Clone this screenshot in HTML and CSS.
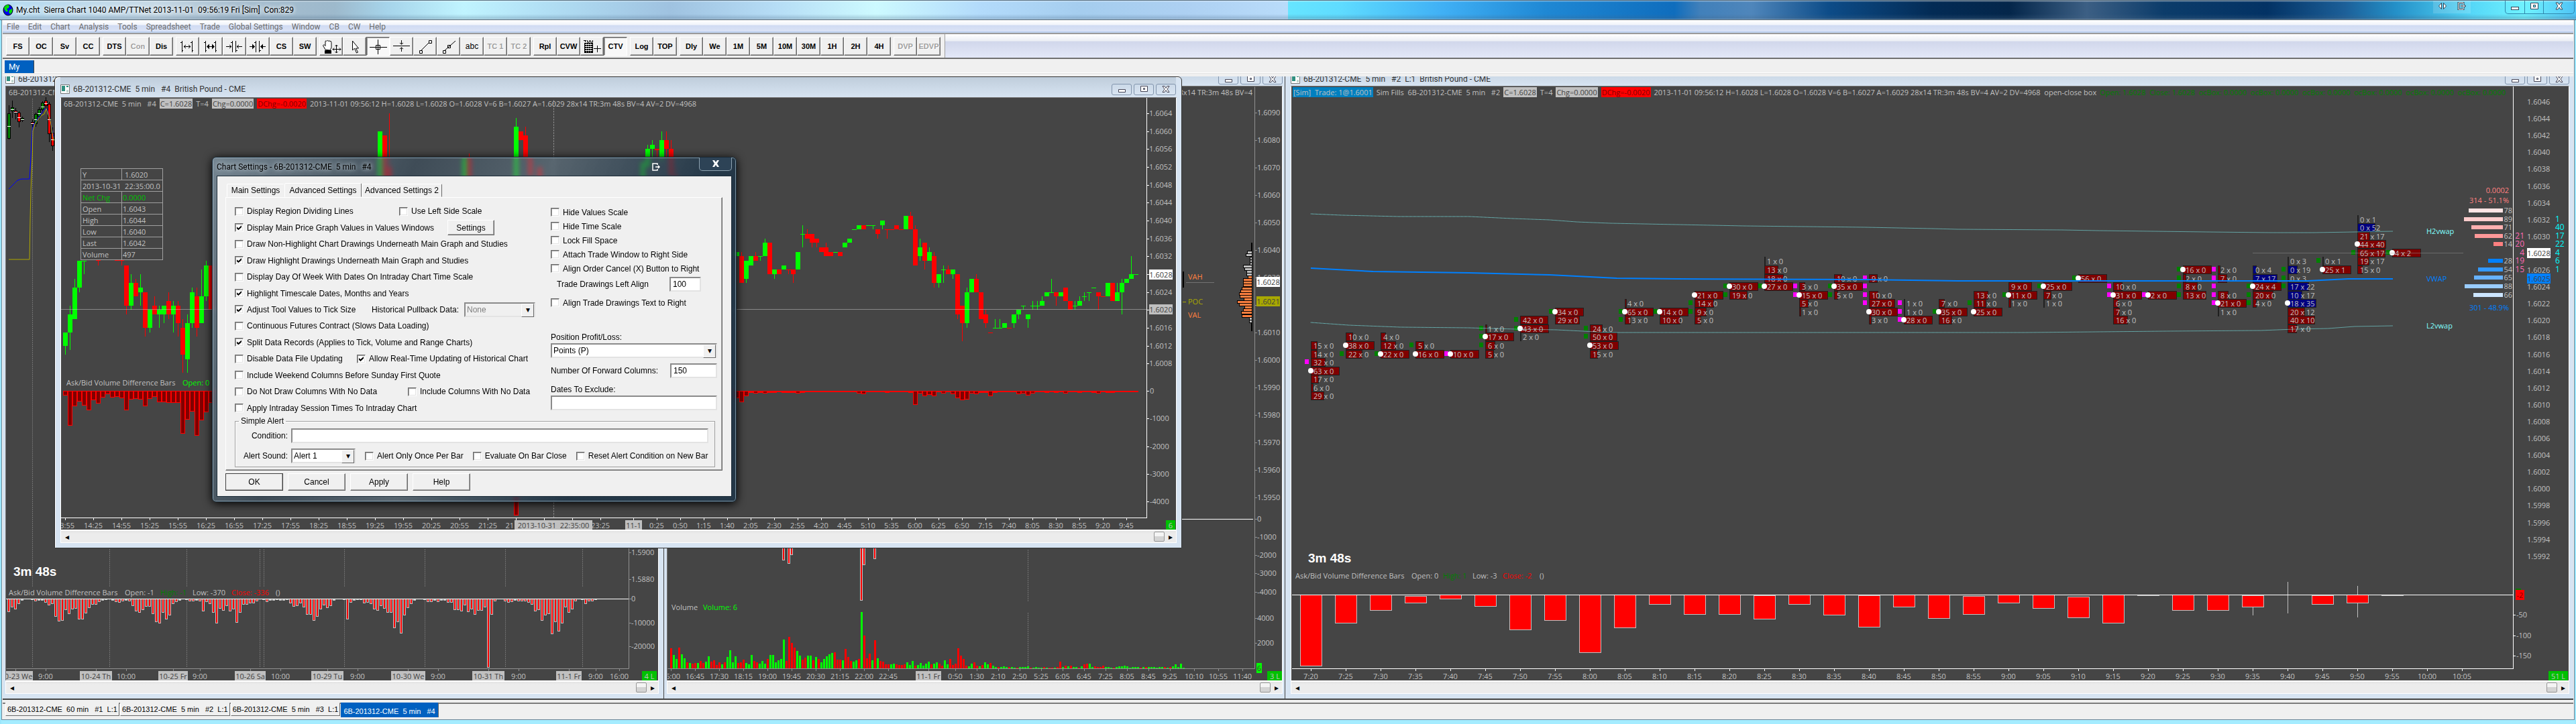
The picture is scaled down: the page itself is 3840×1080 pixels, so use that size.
FILE: index.html
```html
<!DOCTYPE html>
<html lang="en">
<head>
    <meta charset="utf-8">
    <title>My.cht Sierra Chart</title>
    <link rel="stylesheet" href="styles.css">
</head>
<body>
    <header class="titlebar">
        <svg class="globe" width="16" height="18" viewBox="0 0 16 18">
            <ellipse cx="8" cy="9" rx="7" ry="8" fill="#0000f0" stroke="#000"/>
            <path d="M2 5 L6 1 L10 2 L9 6 L6 7 L8 10 L6 12 L3 9 Z M10 9 L14 7 L14 12 L11 15 L9 12 Z" fill="#00e000"/>
        </svg>
        <h1>My.cht&nbsp; Sierra Chart 1040 AMP/TTNet 2013-11-01&nbsp; 09:56:19 Fri [Sim]&nbsp; Con:829</h1>
        <div class="extra-buttons">
            <button aria-label="Move to other monitor"><svg width="14" height="12" viewBox="0 0 14 12"><path d="M5.500 1.500v9L1.500 6zM8.500 1.500v9L12.500 6z" fill="#fff" stroke="#345"/></svg></button>
            <button aria-label="Send to monitor"><svg width="14" height="12" viewBox="0 0 14 12"><path d="M10 3V1H3v10h7V9M6 6h6M10 4l2 2-2 2" fill="none" stroke="#345" stroke-width="3"/><path d="M10 3V1H3v10h7V9M6 6h6M10 4l2 2-2 2" fill="none" stroke="#fff"/></svg></button>
        </div>
        <div class="main-buttons">
            <button aria-label="Minimize"><svg width="14" height="12" viewBox="0 0 14 12"><rect x="1.500" y="7.500" width="11" height="4" fill="#fff" stroke="#345"/></svg></button>
            <button aria-label="Restore"><svg width="14" height="12" viewBox="0 0 14 12"><path d="M1.500 1.500h11v9h-11zM5.500 4.500h3v3h-3z" fill="#fff" fill-rule="evenodd" stroke="#345"/></svg></button>
            <button class="close" aria-label="Close"><svg width="14" height="12" viewBox="0 0 14 12"><path d="M2 1h3l2 3 2-3h3L9 6l3 5H9L7 8l-2 3H2l3-5z" fill="#fff" stroke="#345"/></svg></button>
        </div>
    </header>

    <div class="frame">
        <nav class="menubar">
            <a href="#">File</a><a href="#">Edit</a><a href="#">Chart</a><a href="#">Analysis</a><a href="#">Tools</a><a href="#">Spreadsheet</a><a href="#">Trade</a><a href="#">Global Settings</a><a href="#">Window</a><a href="#">CB</a><a href="#">CW</a><a href="#">Help</a>
        </nav>

        <div class="toolbar">
            <div class="tools">
                <div class="group"><button>FS</button><button>OC</button><button>Sv</button><button>CC</button></div>
                <div class="group"><button>DTS</button><button disabled>Con</button><button>Dis</button></div>
                <div class="group">
                    <button aria-label="Bar spacing out"><svg viewBox="0 0 31 23"><path d="M7.500 3v17M5 5.500h2M7 17.500h2M22.500 3v17M20 5.500h2M22 17.500h2M10 11.500h10M13 9l-3 2.500 3 2.500M17 9l3 2.500-3 2.500"/></svg></button>
                    <button aria-label="Bar width out"><svg viewBox="0 0 31 23"><path d="M7.500 3v17M5 5.500h2M7 17.500h2M22.500 3v17M20 5.500h2M22 17.500h2M10 11.500h10" /><path class="solid" d="M9 11.500l4-4v8zM21 11.500l-4-4v8z"/></svg></button>
                    <button aria-label="Bar spacing in"><svg viewBox="0 0 31 23"><path d="M12.500 3v17M10 5.500h2M17.500 3v17M18 17.500h2M3 11.500h8M8 9l3 2.500-3 2.500M27 11.500h-8M22 9l-3 2.500 3 2.500"/></svg></button>
                    <button aria-label="Bar width in"><svg viewBox="0 0 31 23"><path d="M12.500 3v17M10 5.500h2M17.500 3v17M18 17.500h2M3 11.500h8M27 11.500h-8"/><path class="solid" d="M11 11.500l-4-4v8zM19 11.500l4-4v8z"/></svg></button>
                    <button>CS</button><button>SW</button>
                </div>
                <div class="group">
                    <button aria-label="Hand"><svg viewBox="0 0 31 23"><path d="M7 16L3.500 10 5 8.500l2 2V3.500q1.500-1.500 2 0 1-2.500 3 0 1-1.500 2 0 2-.5 2 2V13l-2 4z" fill="#fff"/><path class="solid" d="M6 17h10v5H6z"/><path d="M23.500 9v12M18 15.500h12M21.500 11l2-2 2 2M21.500 19l2 2 2-2M20 13.500l-2 2 2 2M28 13.500l2 2-2 2"/></svg></button>
                    <button aria-label="Pointer"><svg viewBox="0 0 31 23"><path d="M12.500 3v14l3-3 3 7 2-1-3-6h4z" fill="#fff"/></svg></button>
                    <button class="pressed" aria-label="Chart values"><svg viewBox="0 0 31 23"><path d="M3 12.500h26M15.500 1v22M12.500 9.500h6v6h-6z"/></svg></button>
                    <button aria-label="Horizontal level"><svg viewBox="0 0 31 23"><path d="M3 10.500h25M15.500 2v6M13 6l2.500 2L18 6M15.500 19v-6M13 15l2.500-2L18 15"/></svg></button>
                    <button aria-label="Line"><svg viewBox="0 0 31 23"><path d="M9 18L22 5M7.500 17.500h4v4h-4zM21.500 2.500h4v4h-4z"/></svg></button>
                    <button aria-label="Ray"><svg viewBox="0 0 31 23"><path d="M9 18L26 3M7.500 17.500h4v4h-4zM14.500 9.500h4v4h-4z"/></svg></button>
                    <button class="abc">abc</button><button disabled>TC 1</button><button disabled>TC 2</button>
                </div>
                <div class="group">
                    <button>Rpl</button><button>CVW</button>
                    <button aria-label="Trade window"><svg viewBox="0 0 31 23"><path d="M3 2.500h4M5.500 2v3M8.500 2v3h3V2M13.500 2v3h3V2" /><path class="solid" d="M4 6h13v15H4z"/><path d="M5 8.500h11M5 11.500h11M5 14.500h11M5 17.500h11M7.500 7v13M10.500 7v13M13.500 7v13" stroke="#fff" stroke-dasharray="2 1"/><path d="M18 14.500h11M23.500 10v10"/></svg></button>
                    <button class="pressed">CTV</button>
                </div>
                <div class="group"><button>Log</button><button>TOP</button></div>
                <div class="group"><button>Dly</button><button>We</button><button>1M</button><button>5M</button><button>10M</button><button>30M</button><button>1H</button><button>2H</button><button>4H</button></div>
                <div class="group"><button disabled>DVP</button><button disabled>EDVP</button></div>
            </div>
        </div>

        <div class="book-tabs"><button>My</button></div>

        <main class="mdi">
            <section class="pane">
                <div class="pane-title"><svg class="doc"><use href="#doc"/></svg><h2>6B-201312-CME&nbsp; 60 min&nbsp; &nbsp;#1&nbsp; L:1&nbsp; British Pound - CME</h2></div>
                <div class="chart">
                    <svg class="plot" id="hourly"></svg>
                    <div class="readout"><span>6B-201312-CME&nbsp; 60 min&nbsp; &nbsp;#1</span></div>
                </div>
                <div class="scroll"><button aria-label="Scroll left">◂</button><span class="thumb"></span><button aria-label="Scroll right">▸</button></div>
            </section>

            <section class="pane middle">
                <div class="pane-title"><h2></h2>
                    <div class="pane-buttons"><button aria-label="Minimize"><svg><use href="#min"/></svg></button><button aria-label="Maximize"><svg><use href="#max"/></svg></button><button aria-label="Close"><svg><use href="#close"/></svg></button></div>
                </div>
                <div class="chart">
                    <svg class="plot" id="volume"></svg>
                    <div class="readout end"><span>28x14 TR:3m 48s BV=4</span></div>
                </div>
                <div class="scroll"><button aria-label="Scroll left">◂</button><span class="thumb"></span><button aria-label="Scroll right">▸</button></div>
            </section>

            <section class="pane right">
                <div class="pane-title"><svg class="doc"><use href="#doc"/></svg><h2>6B-201312-CME&nbsp; 5 min&nbsp; &nbsp;#2&nbsp; L:1&nbsp; British Pound - CME</h2>
                    <div class="pane-buttons"><button aria-label="Minimize"><svg><use href="#min"/></svg></button><button aria-label="Maximize"><svg><use href="#max"/></svg></button><button aria-label="Close"><svg><use href="#close"/></svg></button></div>
                </div>
                <div class="chart lit">
                    <svg class="plot" id="footprint"></svg>
                    <div class="readout wide">
                        <span class="sim">[Sim]&nbsp; Trade: 1@1.6001</span>
                        <span>Sim Fills&nbsp; 6B-201312-CME&nbsp; 5 min&nbsp; &nbsp;#2</span>
                        <span class="grey">C=1.6028</span>
                        <span>T=4</span>
                        <span class="grey">Chg=0.0000</span>
                        <span class="down">DChg=-0.0020</span>
                        <span>2013-11-01 09:56:12 H=1.6028 L=1.6028 O=1.6028 V=6 B=1.6027 A=1.6029 28x14 TR:3m 48s BV=4 AV=2 DV=4968&nbsp; open-close box</span>
                        <span class="up">Open: 1.6028&nbsp; Close: 1.6028&nbsp; ocBox: 0.0000&nbsp; ocBox: 0.0000&nbsp; ocBox: 0.0000&nbsp; ocBox: 0.0000&nbsp; ocBox: 0.0000&nbsp; ocBox: 0.0000</span>
                    </div>
                </div>
                <div class="scroll"><button aria-label="Scroll left">◂</button><span class="thumb"></span><button aria-label="Scroll right">▸</button></div>
            </section>

            <section class="pane floating">
                <div class="pane-title"><svg class="doc"><use href="#doc"/></svg><h2>6B-201312-CME&nbsp; 5 min&nbsp; &nbsp;#4&nbsp; British Pound - CME</h2>
                    <div class="pane-buttons"><button aria-label="Minimize"><svg><use href="#min"/></svg></button><button aria-label="Maximize"><svg><use href="#max"/></svg></button><button aria-label="Close"><svg><use href="#close"/></svg></button></div>
                </div>
                <div class="chart lit">
                    <svg class="plot" id="candles"></svg>
                    <div class="readout">
                        <span>6B-201312-CME&nbsp; 5 min&nbsp; &nbsp;#4</span>
                        <span class="grey">C=1.6028</span>
                        <span>T=4</span>
                        <span class="grey">Chg=0.0000</span>
                        <span class="down">DChg=-0.0020</span>
                        <span>2013-11-01 09:56:12 H=1.6028 L=1.6028 O=1.6028 V=6 B=1.6027 A=1.6029 28x14 TR:3m 48s BV=4 AV=2 DV=4968</span>
                    </div>
                    <table class="values">
                        <tr><td>Y</td><td class="pad">1.6020</td></tr>
                        <tr><td colspan="2" class="pad">2013-10-31&nbsp; 22:35:00.0</td></tr>
                        <tr class="net"><td>Net Chg</td><td>0.0000</td></tr>
                        <tr><td>Open</td><td>1.6043</td></tr>
                        <tr><td>High</td><td>1.6044</td></tr>
                        <tr><td>Low</td><td>1.6040</td></tr>
                        <tr><td>Last</td><td>1.6042</td></tr>
                        <tr><td>Volume</td><td>497</td></tr>
                    </table>
                </div>
                <div class="scroll"><button aria-label="Scroll left">◂</button><span class="thumb"></span><button aria-label="Scroll right">▸</button></div>
            </section>

            <form class="dialog" onsubmit="return false">
                <div class="dialog-title">
                    <h2>Chart Settings - 6B-201312-CME&nbsp; 5 min&nbsp; &nbsp;#4</h2>
                    <svg class="exit" width="12" height="12" viewBox="0 0 12 12"><path d="M8 3V1H1v10h7V9M5 6h6M9 4l2 2-2 2" fill="none" stroke="#fff" stroke-width="1.500"/></svg>
                    <button type="button" class="dialog-close" aria-label="Close"><svg width="12" height="10" viewBox="0 0 12 10"><path d="M1 0h3l2 3 2-3h3L8 5l3 5H8L6 7l-2 3H1l3-5z" fill="#fff"/></svg></button>
                </div>
                <div class="client">
                    <div class="tabs"><button type="button">Main Settings</button><button type="button" class="active">Advanced Settings</button><button type="button">Advanced Settings 2</button></div>
                    <div class="sheet">
                        <div class="columns">
                            <div class="options">
                                <div class="row split-scale"><label><input type="checkbox">Display Region Dividing Lines</label><label><input type="checkbox">Use Left Side Scale</label></div>
                                <div class="row split-settings"><label><input type="checkbox" checked>Display Main Price Graph Values in Values Windows</label><button type="button" class="push small">Settings</button></div>
                                <div class="row"><label><input type="checkbox">Draw Non-Highlight Chart Drawings Underneath Main Graph and Studies</label></div>
                                <div class="row"><label><input type="checkbox" checked>Draw Highlight Drawings Underneath Main Graph and Studies</label></div>
                                <div class="row"><label><input type="checkbox">Display Day Of Week With Dates On Intraday Chart Time Scale</label></div>
                                <div class="row"><label><input type="checkbox" checked>Highlight Timescale Dates, Months and Years</label></div>
                                <div class="row split-pullback"><label><input type="checkbox" checked>Adjust Tool Values to Tick Size</label><label for="pullback">Historical Pullback Data:</label>
                                    <div class="drop"><select id="pullback" disabled><option>None</option></select></div></div>
                                <div class="row"><label><input type="checkbox">Continuous Futures Contract (Slows Data Loading)</label></div>
                                <div class="row"><label><input type="checkbox" checked>Split Data Records (Applies to Tick, Volume and Range Charts)</label></div>
                                <div class="row split-updating"><label><input type="checkbox">Disable Data File Updating</label><label><input type="checkbox" checked>Allow Real-Time Updating of Historical Chart</label></div>
                                <div class="row"><label><input type="checkbox">Include Weekend Columns Before Sunday First Quote</label></div>
                                <div class="row split-nodata"><label><input type="checkbox">Do Not Draw Columns With No Data</label><label><input type="checkbox">Include Columns With No Data</label></div>
                                <div class="row"><label><input type="checkbox">Apply Intraday Session Times To Intraday Chart</label></div>
                            </div>
                            <div class="side">
                                <label><input type="checkbox">Hide Values Scale</label>
                                <label><input type="checkbox">Hide Time Scale</label>
                                <label><input type="checkbox">Lock Fill Space</label>
                                <label><input type="checkbox">Attach Trade Window to Right Side</label>
                                <label><input type="checkbox">Align Order Cancel (X) Button to Right</label>
                                <div class="pair left-align"><label for="left-align">Trade Drawings Left Align</label><input type="text" id="left-align" value="100"></div>
                                <label><input type="checkbox">Align Trade Drawings Text to Right</label>
                                <label class="caption first" for="profit">Position Profit/Loss:</label>
                                <div class="drop"><select id="profit"><option>Points (P)</option></select></div>
                                <div class="pair forward"><label for="forward">Number Of Forward Columns:</label><input type="text" id="forward" value="150"></div>
                                <label class="caption" for="exclude">Dates To Exclude:</label>
                                <input type="text" id="exclude">
                            </div>
                        </div>
                        <fieldset>
                            <legend>Simple Alert</legend>
                            <div class="alert-row"><label for="condition">Condition:</label><input type="text" id="condition"></div>
                            <div class="alert-row"><label for="sound">Alert Sound:</label>
                                <div class="drop"><select id="sound"><option>Alert 1</option></select></div>
                                <label><input type="checkbox">Alert Only Once Per Bar</label><label><input type="checkbox">Evaluate On Bar Close</label><label><input type="checkbox">Reset Alert Condition on New Bar</label></div>
                        </fieldset>
                    </div>
                    <div class="actions"><button class="push default">OK</button><button type="button" class="push">Cancel</button><button type="button" class="push">Apply</button><button type="button" class="push">Help</button></div>
                </div>
            </form>
        </main>

        <footer class="chart-tabs">
            <button>6B-201312-CME&nbsp; 60 min&nbsp; &nbsp;#1&nbsp; L:1</button><button>6B-201312-CME&nbsp; 5 min&nbsp; &nbsp;#2&nbsp; L:1</button><button>6B-201312-CME&nbsp; 5 min&nbsp; &nbsp;#3&nbsp; L:1</button><button class="active">6B-201312-CME&nbsp; 5 min&nbsp; &nbsp;#4</button>
        </footer>
    </div>

    <svg class="symbols">
        <symbol id="doc" viewBox="0 0 14 14"><path d="M0.500 0.500h13v13h-13z" fill="#fff" stroke="#777"/><path d="M2 2h5v8H2z" fill="#2f8f7f"/><path d="M9 8h3v4H9z" fill="#c0d8d0"/><path d="M9 2h3v2H9z" fill="#2f8f7f"/></symbol>
        <symbol id="min" viewBox="0 0 14 12"><path d="M2.500 6.500h10v4h-10z" fill="#fff" stroke="#445"/></symbol>
        <symbol id="max" viewBox="0 0 14 12"><path d="M2.500 1.500h10v8h-10zM6.500 4.500h2v2h-2z" fill="#fff" fill-rule="evenodd" stroke="#445"/></symbol>
        <symbol id="close" viewBox="0 0 14 12"><path d="M2 1.500h3l2 3 2-3h3L9 6l3 4.500H9l-2-3-2 3H2L5 6z" fill="#fff" stroke="#445"/></symbol>
    </svg>
    <script src="script.js"></script>
</body>
</html>
```
FILE: styles.css
```css
* {
    box-sizing: border-box;
}

body {
    margin: 0;
    height: 100vh;
    display: flex;
    flex-direction: column;
    overflow: hidden;
    background: #9be6fb;
    font-family: Roboto, "Open Sans", sans-serif;
    font-size: 12px;
    color: #000;
}

button, input, select {
    font: inherit;
    color: inherit;
    margin: 0;
    padding: 0;
    border-radius: 0;
}

h1, h2 {
    margin: 0;
    font-size: inherit;
    font-weight: normal;
    white-space: nowrap;
}

.symbols {
    display: none;
}

/* Main window frame */
.titlebar {
    flex: none;
    height: 30px;
    display: flex;
    align-items: center;
    padding-left: 4px;
    border-top: 1px solid #5a7080;
    border-bottom: 1px solid #4d6272;
    background:
        linear-gradient(rgba(255, 255, 255, .35) 1px, transparent 2px, transparent 20px, rgba(70, 100, 130, .3) 27px, rgba(255, 255, 255, .5) 28px),
        linear-gradient(90deg, #b5dcf2 0, #c6d9e6 6%, #a9bfd0 9%, #9db9cc 13%, #a6d4ea 15%, #c0f4ff 18%, #b2e0f5 21%, #9fc2e0 26%, #b5dcf5 30%, #cdfaff 34%, #b3dbfb 38%, #a5cdee 42%, #add0f2 46%, #b9dcfa 50%, #66e5ff 50%, #5fdcff 52%, #40b0f5 56%, #1f88d4 60%, #0f6dbd 65%, #4180ba 66%, #4f86bb 68%, #0d4c88 71%, #032b55 75%, #04264a 78%, #3c5f84 81%, #0c3c6a 84%, #033264 88%, #1c5f98 91%, #2490c8 93%, #56d8f8 96%, #70f2ff 98%, #4fc3f5 100%);
}

.titlebar h1 {
    flex: 1;
    padding-left: 4px;
    text-shadow: 0 0 6px #fff, 0 0 6px #fff;
}

.titlebar button {
    width: 28px;
    height: 19px;
    border: 0;
    background: none;
}

.extra-buttons, .main-buttons {
    display: flex;
    align-self: flex-start;
}

.extra-buttons {
    margin-right: 51px;
    background: rgba(255, 255, 255, .15);
}

.main-buttons {
    margin-right: 2px;
    border: 1px solid #2f86ac;
    border-top: 0;
    border-radius: 0 0 5px 5px;
}

.main-buttons button + button {
    border-left: 1px solid #2f86ac;
}

.main-buttons .close {
    width: 46px;
}

.frame {
    flex: 1;
    min-height: 0;
    display: flex;
    flex-direction: column;
    margin: 0 2px 6px 2px;
    padding: 0 1px;
    border: 1px solid #6f8696;
    border-top: 0;
    background: #f0f0f0;
    box-shadow: 0 6px 0 #a5ecff, 0 7px 0 #31587a;
}

.menubar {
    flex: none;
    height: 21px;
    display: flex;
    align-items: center;
    gap: 13px;
    padding-left: 6px;
    border-bottom: 2px solid #9a9a9a;
    background: linear-gradient(#fff, #f0f3fa 7px, #d0dbf2 8px, #dbe3f6 17px, #8fb4e6 18px, #f4f4f4 19px);
}

.menubar a {
    color: #6d6d6d;
    text-decoration: none;
    white-space: nowrap;
}

.toolbar {
    flex: none;
    height: 37px;
    border-bottom: 2px solid #707070;
    background: linear-gradient(#fff, #eceff5 10px, #d1d7eb 11px, #e3e8f8);
}

.tools {
    width: 1405px;
    height: 35px;
    display: flex;
    gap: 4px;
    padding: 4px 0 0 5px;
    background: #f0f0f0;
    border-right: 1px solid #a0a0a0;
}

.group {
    display: flex;
}

.group button {
    width: 35px;
    height: 28px;
    border: 1px solid;
    border-color: #fff #696969 #696969 #fff;
    box-shadow: inset -1px -1px 0 #a0a0a0;
    background: #f0f0f0;
    font: bold 11px "Liberation Sans", Arial, sans-serif;
    white-space: nowrap;
}

.group button:disabled {
    color: #a0a0a0;
    text-shadow: 1px 1px 0 #fff;
}

.group .pressed {
    border-color: #696969 #fff #fff #696969;
    box-shadow: inset 1px 1px 0 #a0a0a0;
    background: #f8f8f8;
}

.group .abc {
    font-size: 12px;
    font-weight: normal;
}

.group svg {
    display: block;
    width: 31px;
    height: 23px;
    margin: 0 auto;
    fill: none;
    stroke: #000;
}

.group .solid {
    fill: #000;
    stroke: none;
}

.book-tabs {
    flex: none;
    height: 26px;
    display: flex;
    padding: 2px 0 5px 3px;
    background: linear-gradient(#f0f0f0 20px, #fff 20px, #fff 21px, #e3e3e3 21px, #e3e3e3 22px, #f0f0f0 22px);
}

.book-tabs button {
    width: 44px;
    padding-left: 6px;
    border: 0;
    border-right: 1px solid #444;
    background: #0060c0;
    color: #fff;
    text-align: left;
}

/* Chart windows */
.mdi {
    position: relative;
    flex: 1;
    min-height: 0;
    display: grid;
    grid-template-columns: 986fr 926fr 1920fr;
    overflow: hidden;
    background: #ababab;
}

.pane {
    display: flex;
    flex-direction: column;
    min-width: 0;
    margin-top: -16px;
    padding: 0 7px 7px 4px;
    border-right: 1px solid #444;
    border-bottom: 2px solid #444;
    background: #d7e4f2;
}

.pane.middle {
    padding-right: 3px;
}

.pane.right {
    padding: 0 6px 7px 8px;
    border-right: 0;
}

.pane.floating {
    position: absolute;
    left: 77px;
    top: 0;
    width: 1681px;
    height: 704px;
    margin: 0;
    padding: 0 7px 7px 8px;
    border: 1px solid #333;
    border-radius: 6px 6px 0 0;
    box-shadow: inset 1px 1px 0 #fff;
}

.pane-title {
    flex: none;
    height: 30px;
    display: flex;
    align-items: center;
    gap: 5px;
    color: #333;
    background: linear-gradient(#bfcddb, #d7e4f2);
}

.pane:not(.floating) .pane-title {
    padding-top: 9px;
}

.floating .pane-title {
    padding-top: 6px;
    margin-right: 1px;
}

.pane-title h2 {
    flex: 1;
}

.doc {
    width: 14px;
    height: 14px;
}

.pane-buttons {
    display: flex;
    gap: 3px;
}

.pane-buttons button {
    width: 30px;
    height: 17px;
    border: 1px solid #8295ad;
    border-radius: 3px;
    background: linear-gradient(#cbd9e8, #d9e5f2);
}

.pane-buttons svg {
    display: block;
    width: 14px;
    height: 12px;
    margin: 1px auto;
}

.chart {
    position: relative;
    flex: 1;
    min-height: 0;
    border: 1px solid #777;
    border-right-color: #fff;
    border-bottom: 0;
    background: #454545;
    overflow: hidden;
    font-family: "Open Sans", "Noto Sans", sans-serif;
    font-size: 11px;
}

.chart.lit {
    border-left-color: #fff;
}

.plot {
    display: block;
    width: 100%;
    height: 100%;
    fill: #c0c0c0;
}

.readout {
    position: absolute;
    left: 4px;
    top: 1px;
    right: 44px;
    display: flex;
    gap: 5px;
    height: 15px;
    line-height: 15px;
    overflow: hidden;
    white-space: nowrap;
    color: #c0c0c0;
}

.readout.wide {
    left: 2px;
    right: 84px;
}

.readout.end {
    justify-content: flex-end;
}

.readout .sim {
    background: #0080c0;
}

.readout .grey {
    background: #c0c0c0;
    color: #404040;
}

.readout .down {
    background: #f00;
    color: #800000;
}

.readout .sim, .readout .grey, .readout .down {
    padding: 0 1px;
}

.readout .up {
    color: #008000;
}

.values {
    position: absolute;
    left: 29px;
    top: 105px;
    width: 123px;
    border-collapse: collapse;
    border: 1px solid;
    border-color: #a0a0a0 #fff #fff #a0a0a0;
    background: #454545;
    color: #c0c0c0;
}

.values td {
    width: 50%;
    height: 17px;
    padding: 0 1px;
    border: 1px solid #a0a0a0;
    line-height: 15px;
    white-space: nowrap;
}

.values td:first-child {
    padding-left: 2px;
}

.values .pad {
    padding-left: 4px;
}

.values .net {
    color: #00c000;
}

.scroll {
    flex: none;
    height: 20px;
    display: flex;
    justify-content: space-between;
    align-items: center;
    border: 1px solid #fff;
    border-top-width: 2px;
    background: linear-gradient(#e3e3e3, #ececec 4px, #ececec);
}

.scroll button {
    width: 17px;
    height: 16px;
    border: 0;
    background: none;
    font-size: 12px;
    line-height: 16px;
}

.scroll .thumb {
    width: 16px;
    height: 15px;
    margin-left: auto;
    border: 1px solid #979797;
    border-radius: 2px;
    background: linear-gradient(#f4f4f4 50%, #d4d4d4 50%);
}

/* Chart Settings dialog */
.dialog {
    position: absolute;
    left: 312px;
    top: 120px;
    width: 782px;
    padding: 0 6px 7px;
    border: 1px solid #1a2a36;
    border-radius: 6px;
    background: linear-gradient(115deg, rgba(130, 150, 165, .8), rgba(60, 82, 100, .6) 30%, rgba(100, 122, 138, .6) 50%, rgba(28, 52, 72, .8) 75%);
    backdrop-filter: blur(3px);
    box-shadow: inset 0 0 0 1px rgba(180, 205, 220, .6), 0 2px 14px #000;
    font: 12px "Liberation Sans", Arial, sans-serif;
}

.dialog-title {
    height: 27px;
    display: flex;
    align-items: center;
    font: 12px Roboto, "Open Sans", sans-serif;
}

.dialog-title h2 {
    text-shadow: 0 0 7px #b8c4cc, 0 0 7px #b8c4cc;
}

.exit {
    margin-left: auto;
    margin-right: 58px;
}

.dialog-close {
    align-self: flex-start;
    width: 49px;
    height: 20px;
    border: 1px solid #8fa3b0;
    border-top: 0;
    border-radius: 0 0 5px 5px;
    background: #2d4356;
}

.client {
    padding: 10px 13px 8px 12px;
    border: 1px solid #1c2c38;
    background: #f0f0f0;
}

.tabs {
    display: flex;
    align-items: flex-end;
    height: 21px;
    padding-left: 2px;
}

.tabs button {
    width: 120px;
    height: 20px;
    border: 1px solid;
    border-color: #fff #696969 transparent #fff;
    border-radius: 2px 2px 0 0;
    background: #f0f0f0;
}

.tabs button:first-child {
    width: 86px;
    border-right-color: #f0f0f0;
}

.tabs .active {
    width: 115px;
    height: 21px;
}

.sheet {
    height: 408px;
    padding: 8px 10px 2px 13px;
    border: 1px solid;
    border-color: #fff #696969 #696969 #fff;
    box-shadow: inset -1px -1px 0 #a0a0a0;
}

.columns {
    display: grid;
    grid-template-columns: 471px 248px;
    height: 318px;
}

.options {
    display: grid;
    grid-auto-rows: 1fr;
}

.row {
    display: grid;
    align-items: center;
    white-space: nowrap;
}

.split-scale {
    grid-template-columns: 245px 1fr;
}

.split-nodata {
    grid-template-columns: 258px 1fr;
}

.split-updating {
    grid-template-columns: 182px 1fr;
}

.split-settings {
    grid-template-columns: 317px 70px;
}

.split-pullback {
    grid-template-columns: 204px 138px 106px;
}

.dialog label {
    display: flex;
    align-items: center;
    gap: 5px;
    white-space: nowrap;
}

.dialog input[type="checkbox"] {
    appearance: none;
    flex: none;
    width: 13px;
    height: 13px;
    border: 1px solid;
    border-color: #696969 #fff #fff #696969;
    outline: 0;
    background: #fff;
    box-shadow: inset 1px 1px 0 #a0a0a0, inset -1px -1px 0 #e3e3e3;
}

.dialog input:checked::before {
    content: "";
    display: block;
    width: 7px;
    height: 7px;
    margin: 2px;
    background: #000;
    clip-path: polygon(0 30%, 35% 60%, 100% 0, 100% 40%, 35% 100%, 0 70%);
}

.dialog input[type="text"], .drop {
    width: 100%;
    height: 22px;
    padding: 0 3px;
    border: 2px solid;
    border-color: #8a8a8a #e3e3e3 #e3e3e3 #8a8a8a;
    background: #fff;
}

.drop {
    position: relative;
    padding: 0;
}

.drop select {
    appearance: none;
    display: block;
    width: 100%;
    height: 18px;
    padding-left: 2px;
    border: 0;
    background: #fff;
}

.drop select:disabled {
    background: #f0f0f0;
    color: #808080;
    opacity: 1;
}

.drop::after {
    content: "▾";
    position: absolute;
    right: 0;
    top: 0;
    width: 17px;
    height: 18px;
    border: 1px solid;
    border-color: #fff #696969 #696969 #fff;
    background: #f0f0f0;
    line-height: 16px;
    text-align: center;
    pointer-events: none;
}

.side {
    display: flex;
    flex-direction: column;
    padding-top: 3px;
}

.side > label {
    flex: none;
    height: 21px;
}

.pair {
    display: flex;
    align-items: center;
    justify-content: space-between;
}

.left-align {
    margin: 2px 24px 6px 9px;
}

.left-align input[type="text"] {
    width: 47px;
}

.side .caption {
    height: 18px;
    margin-top: 8px;
}

.side .first {
    margin-top: 32px;
}

.forward {
    margin-top: 8px;
}

.forward input[type="text"] {
    width: 70px;
}

fieldset {
    height: 76px;
    margin: 0;
    padding: 4px 9px 0;
    border: 1px solid #a0a0a0;
    box-shadow: inset 1px 1px 0 #fff;
}

legend {
    margin-left: -4px;
    padding: 0 3px;
}

.alert-row {
    display: flex;
    align-items: center;
    gap: 14px;
    margin-bottom: 8px;
}

.alert-row > label:first-child {
    width: 69px;
    margin-right: -9px;
    justify-content: flex-end;
}

.alert-row .drop {
    width: 96px;
}

.alert-row input[type="text"] {
    width: auto;
    flex: 1;
}

.actions {
    display: flex;
    gap: 7px;
    margin-top: 4px;
}

.push {
    width: 86px;
    height: 26px;
    border: 1px solid;
    border-color: #fff #696969 #696969 #fff;
    box-shadow: inset -1px -1px 0 #a0a0a0;
    background: #f0f0f0;
}

.push.default {
    border-color: #404040;
}

.push.small {
    width: 70px;
    height: 23px;
}

/* Chart tabs */
.chart-tabs {
    flex: none;
    height: 29px;
    display: flex;
    gap: 1px;
    align-items: flex-start;
    padding: 4px 0 0 4px;
    background: linear-gradient(#f0f0f0 4px, #909090 4px, #696969 6px, #f0f0f0 6px);
    font: 11px "Liberation Sans", Arial, sans-serif;
}

.chart-tabs button {
    height: 20px;
    padding: 0 2px;
    border: 1px solid;
    border-color: transparent #696969 #696969 #fff;
    background: #f0f0f0;
    white-space: nowrap;
}

.chart-tabs .active {
    height: 22px;
    padding: 3px 4px 0;
    border: 0;
    border-right: 1px solid #696969;
    background: #0060c0;
    color: #fff;
}
```
FILE: script.js
```js
const GREEN = '#00ff00';
const RED = '#ff0000';
const TEXT = '#c0c0c0';

// ticks above 1.6000 to a price label
const label = ticks => ((16000 + ticks) / 10000).toFixed(4);

// Every chart draws in desktop coordinates; left/top is the corner of its plot
function openChart(id, left, top) {
    const svg = document.getElementById(id);
    const g = document.createElementNS('http://www.w3.org/2000/svg', 'g');
    g.setAttribute('transform', `translate(${-left},${-top})`);
    svg.appendChild(g);

    function add(name, attrs, content) {
        const node = document.createElementNS('http://www.w3.org/2000/svg', name);
        for (const key in attrs) node.setAttribute(key, attrs[key]);
        if (content !== undefined) node.textContent = content;
        g.appendChild(node);
        return node;
    }

    return {
        add,
        rect(x, y, w, h, fill, stroke) {
            if (stroke) add('rect', { x: x + 0.5, y: y + 0.5, width: Math.max(w - 1, 0), height: Math.max(h - 1, 0), fill, stroke });
            else add('rect', { x, y, width: w, height: h, fill });
        },
        line(x1, y1, x2, y2, stroke, dash) {
            add('path', { d: `M${x1} ${y1}L${x2} ${y2}`, transform: 'translate(.5 .5)', fill: 'none', stroke, 'stroke-dasharray': dash || 'none' });
        },
        poly(points, stroke, width, dash) {
            add('polyline', { points, fill: 'none', stroke, 'stroke-width': width, 'stroke-dasharray': dash || 'none' });
        },
        // y is the middle of the text
        text(x, y, s, fill, anchor, size) {
            add('text', { x, y: y + 4, fill: fill || TEXT, 'text-anchor': anchor || 'start', 'font-size': size || 11 }, s);
        },
        tag(x, y, w, s, back, fill) {
            this.rect(x, y - 8, w, 15, back);
            this.text(x + w / 2, y, s, fill, 'middle');
        },
        big(x, y, s) {
            add('text', { x, y, fill: '#fff', 'font-size': 19, 'font-weight': 'bold', 'font-family': 'Liberation Sans' }, s);
        }
    };
}

function drawHourly() {
    const c = openChart('hourly', 9, 129);
    for (const x of [48, 163, 278, 387, 393, 513, 633, 753, 868]) {
        c.line(x, x === 48 ? 147 : 819, x, 875, '#a0a0a0', '1 2');
        c.line(x, 894, x, 996, '#a0a0a0', '1 2');
    }

    // x, high, low, top, bottom, colour
    const bars = [
        [13, 157, 208, 169, 207, '#008000'], [18, 150, 176, 160, 166, '#008000'], [23, 161, 178, 165, 169, RED],
        [28, 166, 190, 168, 182, RED], [33, 174, 182, 176, 180, '#008000'], [48, 178, 190, 182, 186, RED],
        [53, 168, 189, 170, 185, '#008000'], [58, 160, 178, 163, 174, '#008000'], [63, 151, 168, 153, 164, '#008000'],
        [68, 145, 163, 150, 158, RED], [73, 152, 212, 155, 200, RED], [78, 190, 225, 198, 218, RED]
    ];
    for (const [x, hi, lo, top, bottom, fill] of bars) {
        c.rect(x, hi, 1, lo - hi, '#000');
        c.rect(x - 2, top, 5, bottom - top, fill, '#000');
        c.rect(x - 2, Math.round((top + bottom) / 2), 5, 1, '#fff');
    }
    c.poly('13,282 22,273 26,269 32,267 44,267 46,235 48,195 50,186 60,172 66,163 70,162 75,180 80,205', '#0000ff', 1);
    c.poly('13,387 44,387 45,327 46,285 48,240 49,195 53,183 62,172 66,170 69,162 75,180 80,210', '#b0a800', 1);

    const depth = [19, 12, 15, 7, 2, 0, 0, 1, 3, 2, 2, 5, 9, 7, 26, 33, 32, 16, 22, 15, 14, 30, 30, 21, 13, 8, 8, 4, 2, 1, 0,
        2, 4, 5, 3, 2, 3, 10, 18, 20, 16, 11, 11, 22, 34, 36, 20, 30, 24, 7, 4, 2, 0, 1, 3, 3, 2, 3, 18, 4, 7, 20, 36, 14, 17,
        10, 18, 15, 35, 20, 8, 8, 6, 6, 3, 0, 1, 4, 2, 2, 1, 2, 2, 1, 6, 11, 10, 6, 12, 23, 23, 32, 26, 15, 9, 13, 10, 2, 0, 0, 1,
        30, 5, 2, 1, 1, 6, 5, 7, 15, 17, 10, 14, 20, 20, 43, 34, 51, 24, 13, 7, 2, 0, 0, 1, 4, 4, 2, 4, 2, 2, 5, 5, 16, 16, 18, 9,
        19, 15, 23, 17, 17, 12, 102, 23, 3, 0, 0, 3, 5, 4, 2, 3, 3, 3, 5, 8, 18, 16, 32, 24, 22, 52, 34, 48, 36, 12, 20, 15, 3, 0, 1, 7, 3, 3, 1];
    depth.forEach((d, i) => {
        if (!d) return;
        const x = 11 + i * 5;
        c.rect(x, 894, 4, d, TEXT);
        if (d > 2) c.rect(x + 1, 894, 2, d - 1, RED);
    });
    c.rect(9, 893, 929, 1, '#fff');
    c.line(937, 129, 937, 997, '#909090');
    c.line(9, 997, 937, 997, '#909090');

    for (const [y, s] of [[824, '1.5900'], [864, '1.5880'], [893, '0'], [929, '-10000'], [964, '-20000']]) {
        c.rect(938, y, 3, 1, '#909090');
        c.text(941, y, s);
    }
    for (const x of [23, 68, 143, 188, 258, 298, 373, 418, 488, 533, 608, 653, 728, 773, 848, 888, 923]) c.rect(x, 998, 1, 3, '#909090');
    for (const [x, w, s] of [[0, 49, '10-23 We'], [119, 48, '10-24 Th'], [236, 44, '10-25 Fr'], [350, 46, '10-26 Sa'], [464, 48, '10-29 Tu'], [583, 51, '10-30 We'], [704, 48, '10-31 Th'], [829, 38, '11-1 Fr']]) c.tag(x, 1009, w, s, TEXT, '#404040');
    for (const [x, s] of [[68, '9:00'], [188, '10:00'], [298, '9:00'], [418, '10:00'], [533, '9:00'], [653, '9:00'], [773, '9:00'], [888, '9:00'], [923, '16:00']]) c.text(x, 1009, s, TEXT, 'middle');
    c.tag(957, 1009, 22, '4 L', '#00c000', TEXT);

    c.big(20, 859, '3m 48s');
    c.text(13, 884, 'Ask/Bid Volume Difference Bars');
    c.text(186, 884, 'Open: -1');
    c.text(239, 884, 'High: -1', '#008000');
    c.text(287, 884, 'Low: -370');
    c.text(345, 884, 'Close: -336', RED);
    c.text(411, 884, '()');
}

function drawVolume() {
    const c = openChart('volume', 995, 129);
    c.line(1532, 820, 1532, 896, '#a0a0a0', '1 2');
    c.line(1532, 914, 1532, 996, '#a0a0a0', '1 2');

    for (const [x, bottom] of [[1166, 836], [1174, 841], [1178, 828], [1282, 896], [1286, 843], [1302, 834]]) {
        c.rect(x, 800, 4, bottom - 800, TEXT);
        c.rect(x + 1, 800, 2, bottom - 801, RED);
    }

    const volume = ('r30 g20 g14 r31 g21 g15 r9 g8 r7 r8 g8 r11 r8 g10 g18 r10 r12 r5 r9 g6 r9 g17 g27 g9 g18 r8 r9 r13 g8 g6 g20 r11 r9 g7 g11 g7 ' +
        'r14 g20 g20 g9 g12 g14 g43 r11 r47 r38 r31 g26 g19 r13 r16 g19 g19 r12 g17 r14 g9 g14 g18 g21 g23 r24 r13 r13 g12 r29 r17 r11 g10 g12 r14 g84 r49 ' +
        'r15 r22 g12 r42 g15 r11 r10 r6 r6 g6 g7 r6 r5 r5 r6 g9 g5 g11 r4 g5 g8 g4 g7 g10 r6 g7 g9 r7 r4 g12 g6 r14 r5 r7 r30 r19 r14 r4 g3 g7 r9 r4 g3 r5 g9 g6 ' +
        'r8 g4 g2 r2 g2 g3 g2 r2 g2 g1 r1 g2 g2 g2 g3 r1 g1 g2 g1 g1 r2 g1 r1 r1 g1 r2 r10 g2 r4 g3 r4 g2 g2 r1 g3 r6 r7 g7 g2 r3 r2 r2 r4 g2 g2 g1 r1 g2 g3 g3 g4 g3 ' +
        'g1 g2 g2 g2 r1 g2 r2 g2 g2 g2 g1 g2 g2 r2 g1 r2 g3 g6 g2 g7 g1').split(' ');
    volume.forEach((v, i) => {
        const h = Number(v.slice(1));
        c.rect(999 + i * 4, 997 - h, 3, h, v[0] === 'g' ? GREEN : RED);
    });

    c.rect(1761, 774, 107, 1, '#fff');
    c.line(1870, 129, 1870, 997, '#909090');
    c.line(995, 997, 1870, 997, '#909090');
    for (let p = 90; p >= -50; p -= 10) {
        const y = Math.round(168 + (90 - p) * 4.1);
        c.rect(1871, y, 3, 1, '#909090');
        // the 1.6020 label lies under the point of control tag
        if (p !== 20) c.text(1874, y, label(p));
    }
    for (const [y, s] of [[774, '0'], [801, '-1000'], [828, '-2000'], [855, '-3000'], [883, '-4000'], [922, '4000'], [959, '2000']]) {
        c.rect(1871, y, 3, 1, '#909090');
        c.text(1874, y, s);
    }
    c.tag(1873, 421, 35, '1.6028', '#fff', '#404040');
    c.tag(1873, 450, 35, '1.6021', '#a8a800', '#404040');

    // volume profile against the price axis
    const profile = [2, 2, 2, 8, 10, 4, 4, 4, 14, 12, 9, 9, 7, 14, 14, 14, 16, 18, 20, 19, 13, 23, 20, 12, 14, 17, 16, 5, 5, 2, 2, 2];
    profile.forEach((w, i) => {
        const y = 362 + Math.round(i * 4.1);
        c.rect(1867 - w, y, w, 5, i >= 12 && i <= 26 ? '#ff8040' : '#c0c0c0', '#000');
    });
    c.rect(1763, 405, 2, 24, '#000');
    c.line(1768, 421, 1810, 421, '#a0a0a0', '1 1');
    c.rect(1763, 450, 5, 1, '#a8a800');
    c.text(1771, 413, 'VAH', '#ff8040');
    c.text(1771, 450, 'POC', '#a8a800');
    c.text(1771, 470, 'VAL', '#ff8040');

    c.text(1001, 906, 'Volume');
    c.text(1048, 906, 'Volume: 6', GREEN);

    const times = [];
    ['16:00', '16:45', '17:30', '18:15', '19:00', '19:45', '20:30', '21:15', '22:00', '22:45'].forEach((s, i) => times.push([1000 + i * 36, s]));
    ['0:50', '1:30', '2:10', '2:50', '5:25', '6:05', '6:45', '7:25', '8:05', '8:45', '9:25'].forEach((s, i) => times.push([1424 + i * 32, s]));
    ['10:10', '10:55', '11:40'].forEach((s, i) => times.push([1780 + i * 36, s]));
    for (const [x, s] of times) {
        c.rect(x, 998, 1, 3, '#909090');
        c.text(x, 1009, s, TEXT, 'middle');
    }
    c.rect(1384, 998, 1, 3, '#909090');
    c.tag(1365, 1009, 38, '11-1 Fr', TEXT, '#404040');
    c.tag(1873, 997, 8, '6', GREEN, '#404040');
    c.tag(1889, 1009, 23, '3 L', '#00c000', TEXT);
}

function drawFootprint() {
    const c = openChart('footprint', 1925, 129);
    const priceY = p => Math.round(152 + (46 - p) * 12.55);

    // first price, rows as "bid" or "bidxask", * marks the point of control, then side marks
    const columns = [
        [17, '15 14 32 63* 17 6 29', 'm', [15]],
        [18, '10 38* 22', 'g', [16]],
        [18, '4 12 22*', 'g', [16]],
        [17, '5 16*', 'g', [17]],
        [16, '10*', 'm', [16]],
        [19, '1 17* 6 5', 'g', [19, 18, 17]],
        [20, '42 43* 2', 'g', [20, 19]],
        [21, '34* 29', 'g', [21]],
        [19, '24 50 53* 15', 'g', [19, 18]],
        [22, '4 65* 13', 'g', [21, 20]],
        [21, '14* 10', 'g', [21]],
        [23, '21* 14 9 5', 'g', [22, 21]],
        [24, '30* 19', 'g', [24, 23]],
        [27, '1 13 18 27*', 'g', [24]],
        [24, '3 15* 5 1', 'm', [24, 23]],
        [25, '10 35* 5', 'g', [24, 23]],
        [25, '9 - 10 27 30* 3', 'm', [25, 24, 23, 22]],
        [22, '1 1 28*', 'm', [22, 21, 20]],
        [22, '7 35* 16', 'g', [21]],
        [23, '13 11 25*', 'g', [22]],
        [24, '9 11* 1', 'g', [23]],
        [24, '25* 7 1', 'g', [24]],
        [25, '56*', 'g', [25]],
        [24, '10 31* 6 7 16', 'm', [24, 23]],
        [23, '2*', 'm', [23]],
        [26, '16* 2 8 13', 'g', [26, 25, 24, 23]],
        [26, '2 7 - 8 21* 1', 'm', [26, 25, 24, 23, 22]],
        [26, '0x4 7x17 24x4* 20 4', 'g', [24, 23, 22]],
        [27, '0x3 0x19 0x3 17x22 10x17 18x35* 20x12 40x10 17', 'g', [26, 25, 24]],
        [27, '0x1 25x1*', 'g', [27]],
        [32, '0x1 0x52 21x17 44x40* 65x17 19x17 15', 'g', [28]],
        [28, '4x2*', 'g', [28]]
    ];
    columns.forEach(([first, list, mark, marks], k) => {
        const x = 1954 + k * 52;
        const rows = list.split(' ').map(s => {
            if (s === '-') return null;
            const [bid, ask] = s.replace('*', '').split('x').map(Number);
            return { bid, ask: ask || 0, poc: s.endsWith('*') };
        });
        const max = Math.max(...rows.map(r => r ? r.bid + r.ask : 0));
        rows.forEach((r, i) => {
            if (!r) return;
            const w = Math.max(2, Math.round((r.bid + r.ask) / max * 43));
            c.rect(x, priceY(first - i) - 7, w, 13, r.ask > r.bid ? '#000080' : '#800000', '#202020');
        });
        for (const p of marks) c.rect(x - 9, priceY(p) - 5, 6, 7, mark === 'g' ? '#008000' : '#ff00ff');
        rows.forEach((r, i) => {
            if (!r) return;
            const y = priceY(first - i);
            c.text(x + 4, y, `${r.bid} x ${r.ask}`);
            if (r.poc) c.add('ellipse', { cx: x, cy: y - 1, rx: 4, ry: 4, fill: '#fff' });
        });
    });

    c.poly('1954,319 2000,321 2085,323 2190,323 2255,326 2310,328 2350,331 2400,333 2500,335 2600,337 2780,339 2880,341 2918,342 3074,343 3127,344 3290,346 3386,347 3450,347 3510,346 3567,345', '#80ffff', 1, '1 1');
    c.poly('1954,400 2047,405 2190,407 2310,410 2410,415 2500,416 2780,417 2850,418 2918,419 3440,419 3500,416 3567,416', '#0080ff', 2);
    c.poly('1954,481 2010,485 2087,488 2190,489 2260,491 2320,492 2400,496 2590,496 2880,496 3020,496 3230,494 3370,493 3420,491 3470,490 3510,487 3567,486', '#80ffff', 1, '1 1');
    c.line(3358, 377, 3671, 377, '#909090', '1 1');
    c.text(3617, 345, 'H2vwap', '#80ffff');
    c.text(3617, 416, 'VWAP', '#0080ff');
    c.text(3617, 486, 'L2vwap', '#80ffff');

    const depth = [
        [314, 51, 78, '#ffe4e4'], [327, 58, 89, '#ffcccc'], [339, 47, 71, '#ffb0b0'], [352, 42, 62, '#ff9898'], [364, 14, 14, '#ff8080'],
        [389, 22, 28, '#0080ff'], [402, 37, 54, '#3399ff'], [414, 43, 65, '#66b2ff'], [427, 57, 88, '#99ccff'], [440, 44, 66, '#cce5ff']
    ];
    for (const [y, w, n, fill] of depth) {
        c.rect(3731 - w, y - 3, w, 6, fill);
        c.text(3745, y, n, TEXT, 'end');
    }
    c.text(3740, 284, '0.0002', '#ff8080', 'end');
    c.text(3740, 299, '314 - 51.1%', '#ff8080', 'end');
    c.text(3740, 459, '301 - 48.9%', '#0080ff', 'end');
    for (const [y, n] of [[352, 21], [364, 20], [377, 4], [389, 19], [402, 15]]) c.text(3763, y, n, '#ff69b4', 'end', 12);
    for (const [y, n] of [[327, 1], [339, 40], [352, 17], [364, 22], [377, 4], [389, 6], [402, 1]]) c.text(3809, y, n, '#00ffff', 'start', 12);

    c.rect(3746, 129, 1, 869, '#fff');
    for (let p = 46; p >= -8; p -= 2) {
        if (p !== 28) c.text(3767, priceY(p), label(p));
    }
    c.tag(3767, 378, 35, '1.6028', '#fff', '#404040');
    c.tag(3767, 416, 35, '1.6025', '#0080ff', '#404040');

    // volume difference: start, end, then optional wick
    const bars = [[0, 106], [0, 42], [0, 23], [2, 12], [0, 6], [0, 17], [0, 52], [0, 38], [0, 86], [0, 49], [0, 14], [0, 29], [0, 29], [1, 36], [0, 14],
        [0, 30], [1, 48], [0, 18], [0, 35], [2, 29], [0, 12], [0, 20], [3, 34], [0, 42], [0, 1], [0, 23], [0, 23], [1, 18, 0, 31], [0, 0, -19, 28], [1, 14], [0, 12, -13, 34], [0, 1]];
    bars.forEach(([from, to, hi, lo], i) => {
        const x = 1954 + i * 52;
        if (lo) c.rect(x, 887 + hi, 1, lo - hi, TEXT);
        if (to > 1) c.rect(x - 16, 887 + from, 33, to - from + 1, RED, TEXT);
        else if (to) c.rect(x - 16, 888, 33, 1, TEXT);
    });
    c.rect(1926, 887, 1820, 1, '#fff');
    c.rect(1926, 997, 1820, 1, '#fff');
    for (const [y, s] of [[917, '-50'], [948, '-100'], [978, '-150']]) {
        c.rect(3747, y, 3, 1, '#fff');
        c.text(3751, y, s);
    }
    c.rect(3750, 878, 8, 3, '#008000');
    c.tag(3750, 888, 13, '-2', RED, '#800000');
    for (let i = 0; i < 34; i++) {
        const x = 1954 + i * 52;
        const minutes = 440 + i * 5;
        c.rect(x, 998, 1, 3, '#fff');
        c.text(x, 1009, Math.floor(minutes / 60) + ':' + String(minutes % 60).padStart(2, '0'), TEXT, 'middle');
    }
    c.tag(3799, 1009, 29, '51 L', '#00c000', TEXT);

    c.big(1950, 839, '3m 48s');
    c.text(1931, 859, 'Ask/Bid Volume Difference Bars');
    c.text(2104, 859, 'Open: 0');
    c.text(2151, 859, 'High: 1', '#008000');
    c.text(2195, 859, 'Low: -3');
    c.text(2240, 859, 'Close: -2', RED);
    c.text(2295, 859, '()');
}

function drawCandles() {
    const c = openChart('candles', 91, 146);
    const priceY = p => Math.round(169 + (64 - p) * 6.665);

    // bar: open high low close
    const data = `0:12 15 10 15|1:15 21 11 19|2:18 27 18 25|3:25 31 24 31|4:31 31 28 31|7:32 32 30 31|11:32 32 31 31|12:32 32 30 31|13:30 30 19 21|14:21 28 20 26|15:26 27 23 23
        |16:24 28 21 25|17:24 24 14 16|18:16 20 15 20|19:21 23 19 19|20:19 21 16 20|21:19 21 17 21|22:22 24 18 19|23:19 22 15 21|24:21 22 14 17|25:16 18 6 10|26:9 19 6 17
        |27:17 25 16 24|28:23 25 14 16|29:17 29 17 23|30:23 31 22 30|31:30 30 20 20|67:44 60 44 60|68:59 59 43 43|69:52 64 48 48|85:42 54 42 54|86:54 55 46 46|96:40 63 40 61
        |97:60 60 58 58|98:59 61 54 54|99:54 54 50 50|101:52 52 48 48|123:45 53 45 53|124:52 57 52 56|125:56 58 54 57|126:56 56 54 55.8|127:54 60 53 58|128:58 60 54 56|129:56 58 50 50|130:50 52 46 46
        |143:32 33 32 33|144:32 33 26 26|145:27 31 26 31|146:30 32 30 32|147:32 33 31 31|148:32 32 31 32|149:32 36 32 35|150:35 35 28 28|151:28 29 27 29|152:29 29 28 28|153:29 30 29 30
        |154:29 29 28 28.9|155:29 29 26 28|156:29 33 29 33|157:37 39 34 37|158:37 38 36 36|159:37 37 34 35|160:36 36 34 35|161:34 34 33 33|162:34 35 32 32|163:33 33 32 32|164:33 33 33 33
        |165:33 33 32 32|166:34 35 34 35|167:35 36 35 36|168:38 38 38 38|169:38 39 38 39|170:39 39 38 38|171:39 39 39 39|172:39 39 38 39|173:38 38 36 37|174:39 40 38 40|175:38 38 36 37.9
        |176:38 38 38 37.9|177:39 39 38 38|178:38 38 38 37.9|179:38 41 38 41|180:41 42 38 38|181:38 39 30 30|182:32 36 31 34|183:35 35 29 31|184:31 34 31 33|185:32 33 25 26|186:26 28 25 28
        |187:29 30 26 29|188:29 30 28 28|189:28 29 27 29|190:28 28 18 19|191:21 21 13 17|192:17 25 16 24|193:24 27 24 27|194:27 28 24 24|195:24 24 18 18|196:19 20 16 17|197:15 15 15 14.9
        |198:16 18 16 16|199:16 18 16 16|200:16 17 16 17|201:16 16 16 15.9|202:17 19 16 19|203:19 20 18 20|204:21 21 20 21|205:18 19 16 19|206:21 22 20 21|207:21 22 20 21|208:21 23 21 22
        |209:23 24 23 24|210:24 27 24 24|211:24 24 21 23|212:23 24 23 24|213:25 25 22 22|214:22 22 20 20|215:21 22 20 21|216:21 23 21 22|217:23 24 22 23|218:24 24 22 24|219:25 25 25 25
        |220:24 24 20 23|221:23 23 23 22.9|222:23 26 23 26|223:26 26 22 22|224:22 26 22 24|225:24 27 19 26|226:26 27 26 27|227:27 32 27 28|228:28 28 28 28`;
    c.line(825, 149, 825, 772, '#a0a0a0', '2 2');
    for (const item of data.split('|')) {
        const [i, bar] = item.trim().split(':');
        const [open, high, low, close] = bar.split(' ').map(Number);
        const x = 97 + i * 7;
        const fill = close >= open ? GREEN : RED;
        const top = priceY(Math.max(open, close));
        c.rect(x, priceY(high), 1, Math.max(0, priceY(low) - priceY(high)), fill);
        c.rect(x - 3, top, 7, Math.max(1, priceY(Math.min(open, close)) - top), fill);
    }
    c.line(91, 461, 1709, 461, '#d0d0d0', '1 1');

    const left = [6, 51, 22, 15, 21, 28, 13, 18, 9, 4, 9, 8, 10, 28, 12, 11, 12, 22, 11, 8, 16, 16, 17, 17, 17, 63, 42, 30, 66, 43, 31, 17];
    const right = [10, 16, 7, 2, 3, 2, 3, 2, 2, 1, 2, 2, 2, 3, 2, 1, 1, 1, 1, 1, 1, 1, 1, 1, 1, 1, 3, 4, 1, 1, 1, 1, 2, 1, 1, 1, 1, 2, 20, 3, 7, 5, 7, 1, 3, 1, 4,
        10, 13, 12, 3, 4, 2, 2, 7, 2, 1, 1, 1, 1, 4, 3, 6, 3, 1, 1, 2, 1, 2, 1, 3, 1, 1, 2, 1, 1, 2, 3, 1, 2, 2, 1, 1, 1, 1, 1];
    function diff(i, d) {
        c.rect(97 + i * 7 - 3, 583, 7, d + 1, d > 2 ? '#800000' : RED, RED);
    }
    left.forEach((d, k) => diff(k, d));
    diff(96, 185);
    right.forEach((d, k) => diff(143 + k, d));
    c.rect(94, 583, 1603, 1, RED);
    c.text(99, 571, 'Ask/Bid Volume Difference Bars');
    c.text(272, 571, 'Open: 0', GREEN);

    c.rect(1709, 146, 1, 627, '#fff');
    c.rect(91, 772, 1619, 1, '#fff');
    for (let p = 64; p >= 8; p -= 4) {
        c.rect(1710, priceY(p), 3, 1, '#fff');
        if (p !== 28 && p !== 20) c.text(1713, priceY(p), label(p));
    }
    c.tag(1713, 410, 35, '1.6028', '#fff', '#404040');
    c.tag(1713, 462, 35, '1.6020', TEXT, '#404040');
    for (const [y, s] of [[583, '0'], [624, '-1000'], [666, '-2000'], [707, '-3000'], [748, '-4000']]) {
        c.rect(1710, y, 3, 1, '#fff');
        c.text(1714, y, s);
    }

    const times = [];
    for (let i = 0; i < 20; i++) {
        const m = 835 + i * 30;
        times.push([97 + i * 42, Math.floor(m / 60) + ':' + (m % 60)]);
    }
    ['0:25', '0:50', '1:15', '1:40', '2:05', '2:30', '2:55', '4:20', '4:45', '5:10', '5:35', '6:00', '6:25', '6:50', '7:15', '7:40', '8:05', '8:30', '8:55', '9:20', '9:45']
        .forEach((s, i) => times.push([979 + i * 35, s]));
    // these sit under the cursor date
    const covered = ['21:55', '22:25', '22:55'];
    for (const [x, s] of times) {
        c.rect(x, 773, 1, 3, '#fff');
        if (!covered.includes(s)) c.text(x, 784, s, TEXT, 'middle');
    }
    c.text(766, 784, '21', TEXT, 'end');
    c.tag(767, 784, 116, '2013-10-31\u00a0 22:35:00', TEXT, '#404040');
    c.rect(944, 773, 1, 3, '#fff');
    c.tag(932, 784, 25, '11-1', TEXT, '#404040');
    c.tag(1738, 784, 14, '6', '#00c000', TEXT);
}

drawHourly();
drawVolume();
drawFootprint();
drawCandles();
```
